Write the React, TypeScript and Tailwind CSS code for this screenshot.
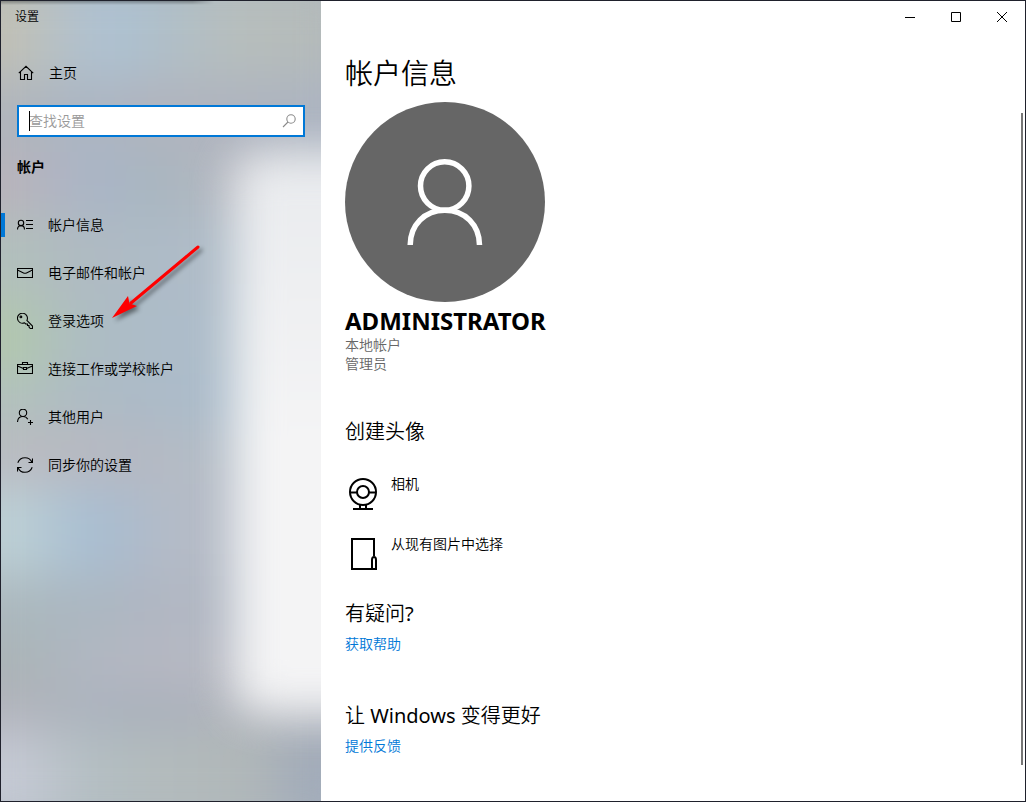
import type { ReactNode } from 'react';

function Icon({ children, className = 'size-4' }: { children: ReactNode; className?: string }) {
  return (
    <svg viewBox="0 0 16 16" className={`shrink-0 ${className}`} fill="none" stroke="currentColor" strokeWidth="1.1" aria-hidden="true">
      {children}
    </svg>
  );
}

const navItems: { label: string; icon: ReactNode; active?: boolean }[] = [
  {
    label: '帐户信息',
    active: true,
    icon: (
      <Icon>
        <circle cx="4" cy="5.900" r="2.700" />
        <path d="M.5 12.500c0-2.400 1.500-3.900 3.500-3.900s3.500 1.500 3.500 3.900M9 3.500h7M9 7.500h7M9 11.500h7" />
      </Icon>
    ),
  },
  {
    label: '电子邮件和帐户',
    icon: (
      <Icon>
        <path d="M.5 3.500h15v9H.5zM.5 5l6 2.900q1.500.7 3 0l6-2.900" />
      </Icon>
    ),
  },
  {
    label: '登录选项',
    icon: (
      <Icon>
        <path d="M9.900 7.500A5 5 0 1 0 7.500 9.800l1.200 1.200h1.800v1.500H12V14l1.300 1.500h2.200v-2.400z" />
        <circle cx="3.900" cy="3.900" r=".9" />
      </Icon>
    ),
  },
  {
    label: '连接工作或学校帐户',
    icon: (
      <Icon>
        <path d="M.5 3.500h15v9H.5zM5.500 3.500v-2h5v2M.5 5l6 2.500M15.500 5l-6 2.500M6.500 6.500h3v2h-3z" />
      </Icon>
    ),
  },
  {
    label: '其他用户',
    icon: (
      <Icon>
        <circle cx="6" cy="3.800" r="3.700" />
        <path d="M.5 13c.2-3.300 2.400-5.500 5.500-5.500 2.200 0 3.800 1 4.800 2.700M13.500 11v5M11 13.500h5" />
      </Icon>
    ),
  },
  {
    label: '同步你的设置',
    icon: (
      <Icon>
        <path d="M.8 5.800C2 2.500 4.800.7 8 .7c3.300 0 5.800 1.800 7 4.600M15.500 1.500v4h-4M15.200 10.200c-1.200 3.300-4 5.100-7.200 5.100-3.300 0-5.800-1.800-7-4.600M.5 14.500v-4h4" />
      </Icon>
    ),
  },
];

const backdropBands = [
  'flex-[11] bg-[linear-gradient(to_right,#c3c0b2_8%,#adc2d4_35%,#afbfc9_50%,#b7bebc_70%,#b3b9b9)]',
  'flex-[8] bg-[linear-gradient(to_right,#b0b5bb_10%,#abb5c3_30%,#b1b4bd_50%,#aeb4bf_70%,#abb4c2)]',
  'flex-[7] bg-[linear-gradient(to_right,#bab3ba_10%,#a9b5c8_32%,#a8b6bf_50%,#b7b8c0_70%,#bcc3ca)]',
  'flex-[9] bg-[linear-gradient(to_right,#b2c0bb_10%,#afbac2_30%,#aebbc7_50%,#b0bdc9_70%)]',
  'flex-[8] bg-[linear-gradient(to_right,#b2c9ab_10%,#aebdc2_28%,#acbbc9_50%,#b0bfcb_70%)]',
  'flex-[6] bg-[linear-gradient(to_right,#b2c2bc_10%,#aebbc5_30%,#abbac8_50%,#aebfcd_70%)]',
  'flex-[6] bg-[linear-gradient(to_right,#babac0_10%,#b9b8c0_30%,#b4bac3_50%,#b5bfc9_70%)]',
  'flex-[10] bg-[linear-gradient(to_right,#bed1d5_10%,#a7bdd2_32%,#b4bac6_53%,#b6bdc8_70%)]',
  'flex-[7] bg-[linear-gradient(to_right,#abb8bd_10%,#abb7c1_30%,#b1b6c2_50%,#b2bac5_70%)]',
  'flex-[5] bg-[linear-gradient(to_right,#a9b3b4_10%,#b1b7c2_30%,#b7b8c2_50%,#b8bbc4_70%)]',
  'flex-[5] bg-[linear-gradient(to_right,#b2b3bb_10%,#abb3bd_30%,#a9b0bc_50%,#b0b4bb_70%)]',
  'flex-[10] bg-[linear-gradient(to_right,#c7cbd6_10%,#b3bec2_32%,#b3bbbc_50%,#b0b7b8_75%,#a0aab9_88%)]',
];

function Backdrop() {
  return (
    <div className="absolute inset-0 overflow-hidden bg-[#aeb6c0]" aria-hidden="true">
      <div className="absolute -inset-x-8 -inset-y-6 flex flex-col blur-[24px]">
        {backdropBands.map((band) => (
          <div key={band} className={band} />
        ))}
      </div>
      <div className="absolute -right-20 top-[19%] bottom-[11%] w-[166px] rounded-[24px] bg-linear-to-b from-[#e9ebee] to-[#f4f4f5] to-50% blur-[22px]" />
      <div className="absolute left-0 top-0 h-1 w-2/3 bg-linear-to-b from-black/30 to-transparent mask-r-from-90%" />
    </div>
  );
}

function Sidebar() {
  return (
    <aside className="relative w-80 shrink-0">
      <Backdrop />
      <div className="relative">
        <div className="flex h-8 items-center px-3.5 text-xs">设置</div>
        <a href="#home" className="mt-4 flex h-12 items-center gap-[15px] px-[17px]">
          <Icon>
            <path d="M.8 8.200 8 1.300l7.200 6.900M2.500 6.800v7.700h4v-5h3v5h4V6.800" />
          </Icon>
          主页
        </a>
        <label className="relative mx-4 mt-2 flex h-8 items-center border-2 border-[#0078d7] bg-white pl-2.5 pr-1.5">
          <input type="text" aria-label="查找设置" placeholder="查找设置" className="min-w-0 flex-1 bg-transparent leading-5 outline-none placeholder:text-[#999]" />
          <span className="absolute left-2.5 top-1 h-5 w-px bg-black" />
          <Icon className="size-4 text-[#8a8a8a]">
            <circle cx="10" cy="6" r="4.200" />
            <path d="M7 9 2 14" />
          </Icon>
        </label>
        <h2 className="mt-1.5 flex h-12 items-center px-4 font-bold">帐户</h2>
        <nav className="mt-2.5">
          {navItems.map((item) => (
            <a key={item.label} href="#settings" aria-current={item.active ? 'page' : undefined} className="relative flex h-12 items-center gap-[15px] px-4">
              {item.active && <span className="absolute left-0 top-3 h-6 w-1 bg-[#0078d7]" />}
              {item.icon}
              {item.label}
            </a>
          ))}
        </nav>
        <svg viewBox="0 0 94 82" className="absolute left-[110px] top-[242px] w-[94px] drop-shadow-[3px_3px_2px_rgba(0,0,0,0.45)]" aria-hidden="true">
          <path d="M87 4 20 60" stroke="#f00" strokeWidth="3" strokeLinecap="round" />
          <path d="M1 75 17 53l1.500 7.500L26 63z" fill="#f00" />
        </svg>
      </div>
    </aside>
  );
}

function WindowControls() {
  return (
    <div className="flex h-8 justify-end">
      <button type="button" aria-label="最小化" className="flex w-[46px] items-center justify-center">
        <svg viewBox="0 0 10 10" className="size-2.5" stroke="#000" fill="none"><path d="M0 5.500h10" /></svg>
      </button>
      <button type="button" aria-label="最大化" className="flex w-[46px] items-center justify-center">
        <svg viewBox="0 0 10 10" className="size-2.5" stroke="#000" fill="none"><path d="M.5.5h9v9h-9z" /></svg>
      </button>
      <button type="button" aria-label="关闭" className="flex w-[46px] items-center justify-center">
        <svg viewBox="0 0 10 10" className="size-2.5" stroke="#000" fill="none"><path d="m0 0 10 10M10 0 0 10" /></svg>
      </button>
    </div>
  );
}

function SourceButton({ label, children }: { label: string; children: ReactNode }) {
  return (
    <button type="button" className="flex h-10 items-start gap-2.5 text-left leading-5">
      <svg viewBox="0 0 36 40" className="h-10 w-9" fill="none" stroke="#000" strokeWidth="2" aria-hidden="true">
        {children}
      </svg>
      {label}
    </button>
  );
}

export default function App() {
  return (
    <div className="flex min-h-screen border border-[#1f212c] bg-white font-['Noto_Sans','Noto_Sans_CJK_SC',sans-serif] text-sm font-[350] text-black">
      <Sidebar />
      <div className="relative min-w-0 flex-1">
        <WindowControls />
        <main className="flex flex-col items-start px-6 pb-8">
          <h1 className="mt-5 text-[28px] leading-10">帐户信息</h1>
          <svg viewBox="0 0 200 200" className="mt-[9px] size-[200px]" role="img" aria-label="用户头像">
            <circle cx="100" cy="100" r="100" fill="#666" />
            <g fill="none" stroke="#fff" strokeWidth="5.500">
              <circle cx="99.700" cy="84" r="24.200" />
              <path d="M65.200 143c0-20 14.500-34.800 34.600-34.800s34.700 14.800 34.700 34.800" />
            </g>
          </svg>
          <p className="mt-[5px] text-2xl font-bold leading-7">ADMINISTRATOR</p>
          <p className="leading-[19px] text-[#666]">本地帐户</p>
          <p className="leading-[19px] text-[#666]">管理员</p>

          <h2 className="mt-[45px] text-xl leading-7">创建头像</h2>
          <div className="mt-7 flex flex-col items-start gap-5">
            <SourceButton label="相机">
              <circle cx="18" cy="18" r="13" />
              <circle cx="18" cy="18" r="6" />
              <path d="M5 18.500h7M24 18.500h7M15 31v4M21 31v4M8 35h20" />
            </SourceButton>
            <SourceButton label="从现有图片中选择">
              <path d="M29 22V5H7v30h24V26q0-3-2-3t-2 3v9" />
            </SourceButton>
          </div>

          <h2 className="mt-[26px] text-xl leading-7">
            有疑问<span className="font-normal">?</span>
          </h2>
          <a href="#help" className="mt-1.5 leading-5 text-[#0078d7]">获取帮助</a>

          <h2 className="mt-12 text-xl leading-7">
            让 <span className="font-normal">Windows</span> 变得更好
          </h2>
          <a href="#feedback" className="mt-1.5 leading-5 text-[#0078d7]">提供反馈</a>
        </main>
        <div className="absolute bottom-9 right-0.5 top-28 w-0.5 bg-[#767676]" aria-hidden="true" />
      </div>
    </div>
  );
}
